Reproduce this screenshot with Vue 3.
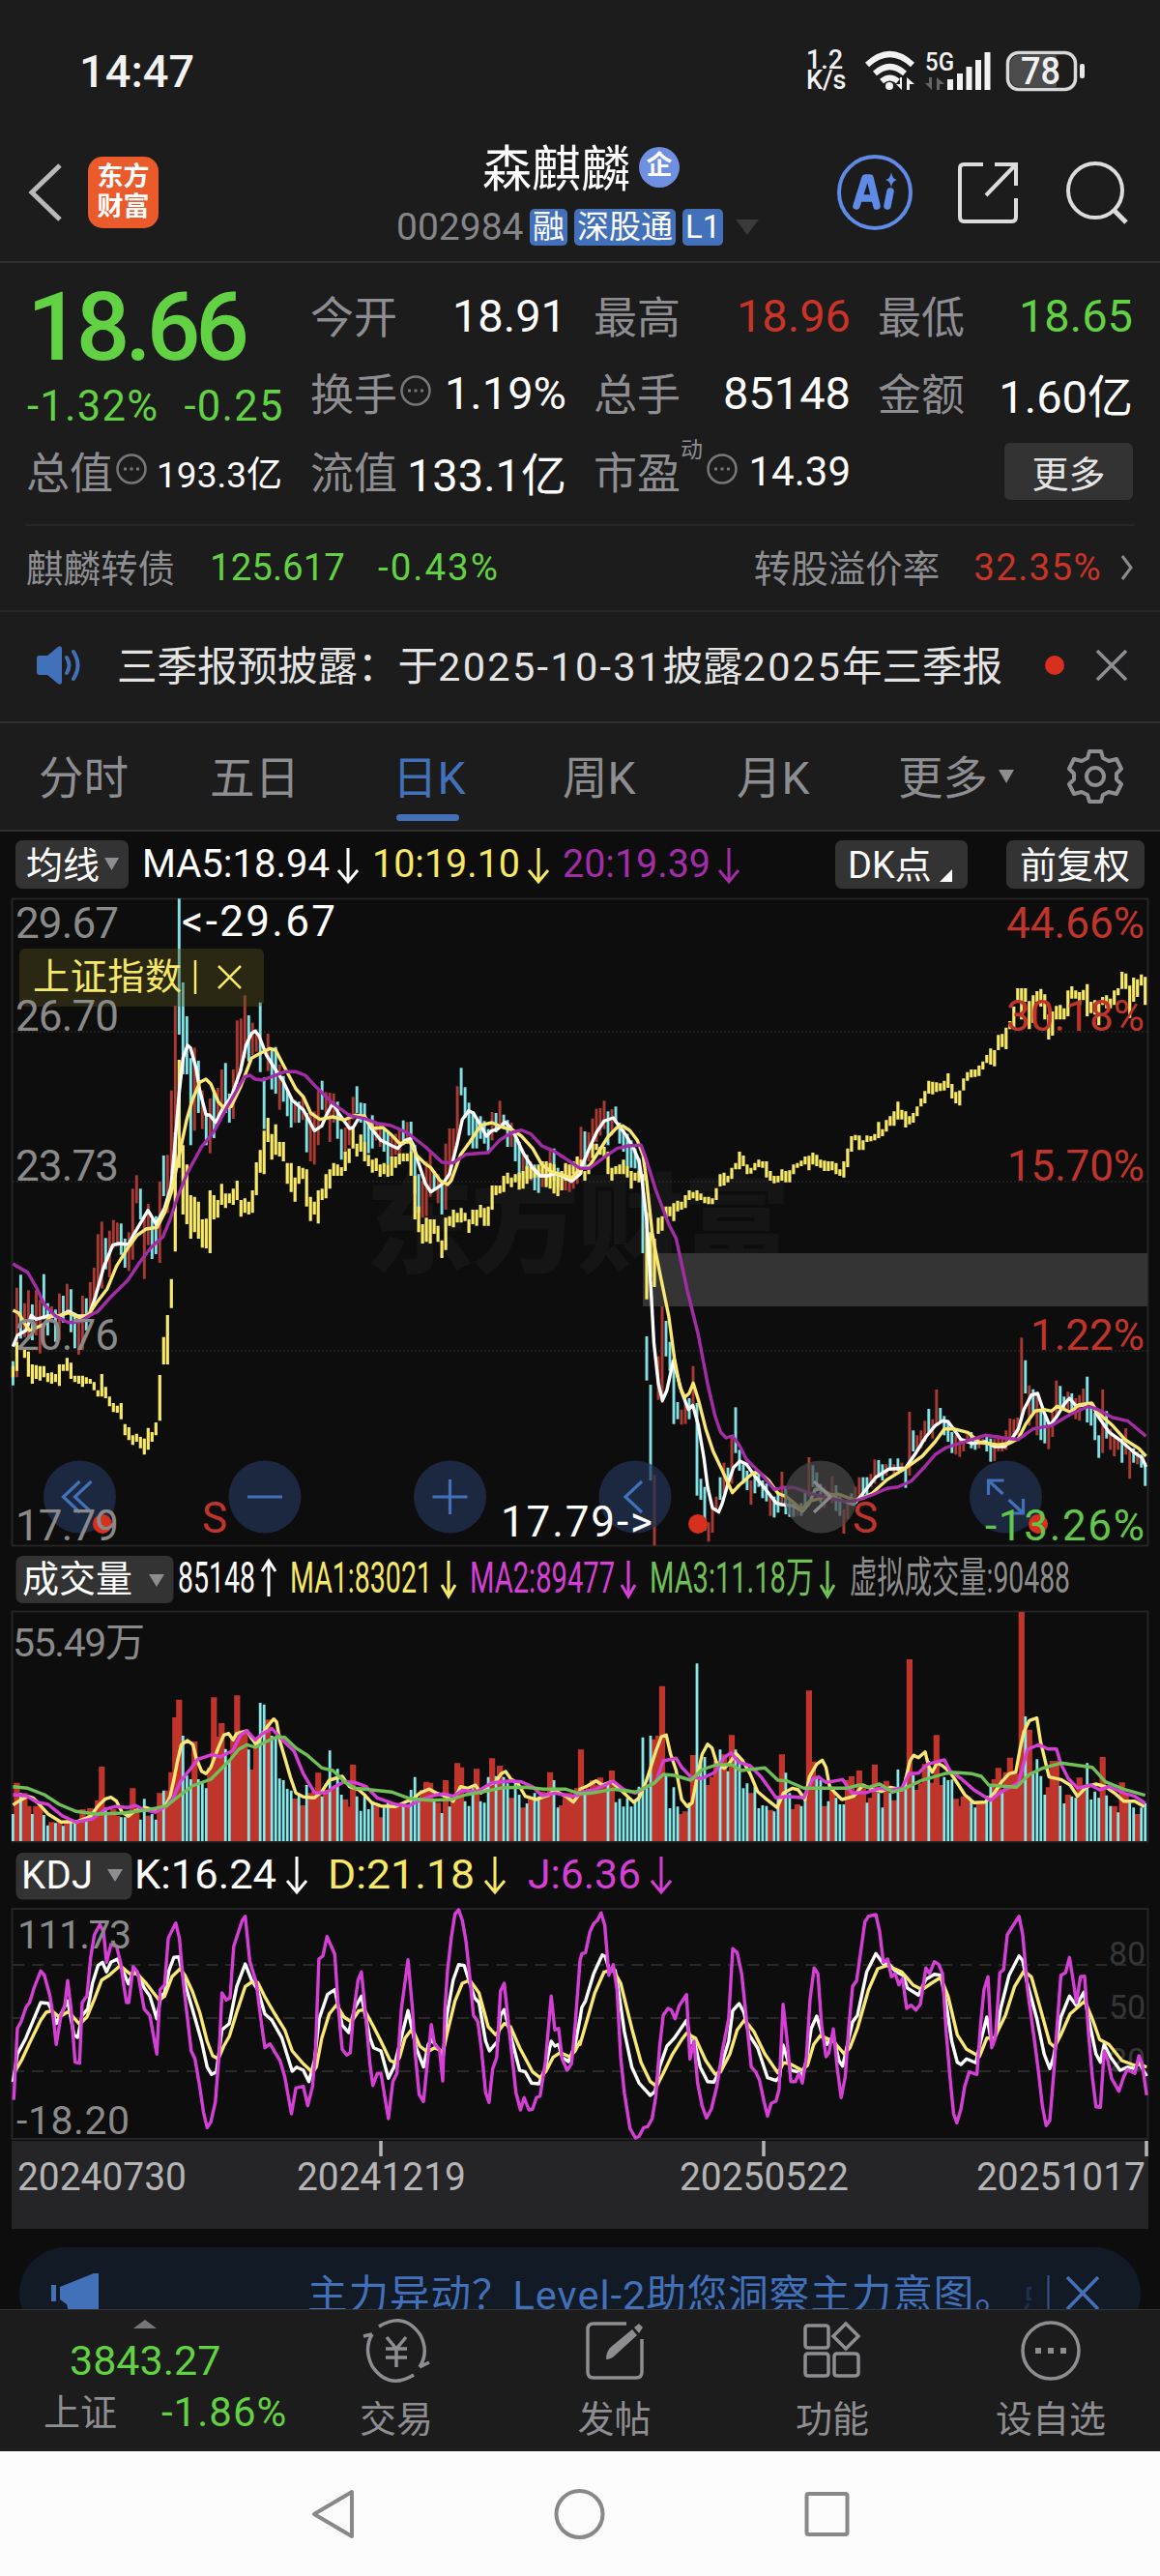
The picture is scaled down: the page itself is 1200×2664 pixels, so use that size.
<!--
  App.vue — 个股行情页（日K）
  从上到下：状态栏、标题栏、报价、公告、周期标签、三个图表、底部导航
-->

<template>
  <div class="page">
    <!-- 状态栏 -->
    <div class="status-bar">
      <span class="clock">14:47</span>
      <span class="speed">1.2<br>K/s</span>
      <svg class="status-icons" width="240" height="50" viewBox="890 48 240 50">
        <g fill="none" stroke="#f2f2f2" stroke-width="6">
          <path d="M897 67Q920.500 45 944 67" />
          <path d="M905 76Q920.500 62 936 76" />
          <path d="M912 84Q920.500 77 929 84" />
        </g>
        <circle cx="920" cy="89" r="4" fill="#f2f2f2" />
        <path d="M933 80v13l-6-6h4v-7zM938 93v-13l8 7h-5v6z" fill="#f2f2f2" />
        <text x="957" y="73" class="net" textLength="30" lengthAdjust="spacingAndGlyphs">5G</text>
        <path d="M964 80v13l-7-7h4v-6zM969 93v-13l8 7h-5v6z" fill="#666" />
        <path d="M983 93v-11M993 93v-17M1002.500 93v-24M1012 93v-31M1021.500 93v-39" stroke="#f2f2f2" stroke-width="6" />
        <rect x="1042.500" y="54.500" width="70" height="38" rx="11" fill="#1c1c1c" stroke="#d8d8d8" stroke-width="3.500" />
        <path d="M1055 57h38v33h-38q-10 0-10-10v-13q0-10 10-10z" fill="#4b4b4b" />
        <rect x="1117" y="66" width="5" height="15" rx="2" fill="#e8e8e8" />
        <text x="1056" y="87" class="battery" textLength="41" lengthAdjust="spacingAndGlyphs">78</text>
      </svg>
    </div>

    <!-- 标题栏 -->
    <header class="header">
      <svg class="back" width="40" height="64" viewBox="0 0 40 64"><path d="M35 4L6 32l29 28" /></svg>
      <div class="logo">东方<br>财富</div>
      <div class="title">
        <div class="name">森麒麟<i>企</i></div>
        <div class="code">
          <span>002984</span><b>融</b><b>深股通</b><b>L1</b>
          <svg width="24" height="16"><path d="M0 0h24L12 16z" fill="#3a3a3a" /></svg>
        </div>
      </div>
      <svg class="tools" width="320" height="90" viewBox="860 154 320 90">
        <circle cx="905" cy="199" r="37" fill="none" stroke="#5f8ae6" stroke-width="4" />
        <path d="M886 213l9-29h5l7 29M889 205h15M921 198l-3 15" fill="none" stroke="#5f8ae6" stroke-width="7.500" stroke-linecap="round" stroke-linejoin="round" />
        <path d="M922 178q1 7 6 8-5 1-6 8-1-7-6-8 5-1 6-8z" fill="#5f8ae6" />
        <g fill="none" stroke="#dcdcdc" stroke-width="4">
          <path d="M1017 170h-20q-4 0-4 4v50q0 5 4 5h50q4 0 4-5v-19M1029 170h22v22M1051 170l-31 32" />
          <circle cx="1133" cy="197" r="28" />
          <path d="M1152 217l13 13" stroke-width="5" />
        </g>
      </svg>
    </header>

    <!-- 报价 -->
    <section class="quote">
      <div class="price-col">
        <div class="price">18.66</div>
        <div class="change"><span>-1.32%</span><span>-0.25</span></div>
      </div>
      <div v-for="q in quotes" :key="q.label" class="cell" :class="q.size">
        <span class="label">{{ q.label }}<sup v-if="q.sup">{{ q.sup }}</sup></span>
        <svg v-if="q.info" class="info" width="32" height="32" viewBox="0 0 32 32">
          <circle cx="16" cy="16" r="14.500" fill="none" stroke="#77777b" stroke-width="2.500" />
          <path d="M8 16h3M14.500 16h3M21 16h3" stroke="#77777b" stroke-width="3" />
        </svg>
        <span class="value" :class="q.color">{{ q.value }}</span>
      </div>
      <button class="more">更多</button>
    </section>

    <div class="bond">
      <span class="cjk">麒麟转债</span>
      <span class="green b1">125.617</span>
      <span class="green b2">-0.43%</span>
      <span class="cjk premium">转股溢价率</span>
      <span class="red b3">32.35%</span>
      <svg width="14" height="28" viewBox="0 0 14 28"><path d="M2 2l9 12-9 12" fill="none" stroke="#8c8c90" stroke-width="3" /></svg>
    </div>

    <!-- 公告 -->
    <div class="notice">
      <svg width="50" height="42" viewBox="0 0 50 42">
        <path d="M3 11h9L23 2q4-2 4 2v34q0 4-4 2L12 31H4q-3 0-3-3V14q0-3 2-3z" fill="#4371b9" />
        <path d="M32 13q5 8 0 16M39 7q9 14 0 28" fill="none" stroke="#4371b9" stroke-width="4" stroke-linecap="round" />
      </svg>
      <p>三季报预披露：于<em>2025-10-31</em>披露<em>2025</em>年三季报</p>
      <i></i>
      <svg class="close" width="34" height="34" viewBox="0 0 34 34"><path d="M2 2l30 30M32 2L2 32" stroke="#8e8e92" stroke-width="3.500" /></svg>
    </div>

    <!-- 周期标签 -->
    <nav class="tabs">
      <span v-for="t in tabs" :key="t" :class="{ active: t === current }" @click="current = t">{{ t }}</span>
      <svg class="caret" width="16" height="14"><path d="M0 0h16L8 14z" fill="#8e8e92" /></svg>
      <svg class="gear" width="60" height="60" viewBox="-30 -30 60 60">
        <path d="M-6-26H6L8-19 14-16 22-18 27-8 22-3V3L27 8 22 18 14 16 8 19 6 26H-6L-8 19-14 16-22 18-27 8-22 3V-3L-27-8-22-18-14-16-8-19z" />
        <circle r="9" />
      </svg>
    </nav>

    <!-- 均线工具栏 -->
    <div class="ma-bar">
      <span class="btn drop">均线<svg width="15" height="13"><path d="M0 0h15L7.500 13z" fill="#8e8e92" /></svg></span>
      <svg width="640" height="50" viewBox="140 868 640 50">
        <g v-for="m in maLegend" :key="m.text" :style="{ color: m.color }" class="legend">
          <text :x="m.x" y="906" font-size="40" :textLength="m.w" lengthAdjust="spacingAndGlyphs">{{ m.text }}</text>
          <path :d="arrow(m.x + m.w + 19, 876, 911)" />
        </g>
      </svg>
      <span class="btn dk">DK点<svg width="13" height="13"><path d="M13 0v13H0z" fill="#fff" /></svg></span>
      <span class="btn fq">前复权</span>
    </div>

    <!-- K线主图 -->
    <svg class="panel" width="1200" height="674" viewBox="0 926 1200 674">
      <text class="watermark" x="378" y="1307" textLength="440">东方财富</text>
      <rect class="frame" x="12.500" y="928.500" width="1175" height="669" />
      <path class="grid" d="M13 1066H1187M13 1221H1187M13 1396H1187" />
      <rect x="665" y="1295" width="522" height="55" fill="#343434" />
      <path v-for="k in kBars" :key="k.d" :d="k.d" :stroke="k.color" stroke-width="2.900" />
      <path :d="indexBars" stroke="#f7e967" stroke-width="3.200" />
      <path :d="ma5" class="line" stroke="#fff" />
      <path :d="ma10" class="line" stroke="#fbe774" />
      <path :d="ma20" class="line" stroke="#a32da6" />

      <rect x="20" y="980" width="253" height="60" rx="6" fill="#57521b" fill-opacity=".4" />
      <text x="34" y="1022" font-size="38" fill="#f7e967" textLength="154">上证指数</text>
      <path d="M202 992v35M226 998l23 23M249 998l-23 23" stroke="#f7e967" stroke-width="2.500" />

      <g class="axis">
        <text v-for="a in priceAxis" :key="a.left" x="16" :y="a.y" textLength="107">{{ a.left }}</text>
      </g>
      <g v-for="b in roundButtons" :key="b.x">
        <circle :cx="b.x" cy="1547" r="37.500" :fill="b.gray ? '#474747' : '#223355'" fill-opacity=".72" />
        <path :d="b.icon" :transform="`translate(${b.x} 1547)`" fill="none" :stroke="b.gray ? '#8b8b8b' : '#4371b9'" stroke-width="3.200" />
      </g>
      <g class="sell">
        <text x="209" y="1584">S</text>
        <text x="882" y="1584">S</text>
      </g>
      <circle v-for="x in [106, 722, 1074]" :key="x" :cx="x" cy="1575" r="10" fill="#d8301f" />
      <text x="16" y="1592" class="over" textLength="107">17.79</text>
      <g class="axis-right">
        <text v-for="a in priceAxis" :key="a.right" x="1184" :y="a.y" :fill="a.fill" :textLength="a.w">{{ a.right }}</text>
        <text x="1184" y="1592" fill="#62c64a" textLength="165">-13.26%</text>
      </g>
      <g class="mark">
        <text x="188" y="967" textLength="159">&lt;-29.67</text>
        <text x="518" y="1588" textLength="157">17.79-&gt;</text>
      </g>
    </svg>

    <!-- 成交量 -->
    <svg class="panel" width="1200" height="306" viewBox="0 1600 1200 306">
      <rect x="16.500" y="1608" width="163" height="49" rx="7" fill="#333" />
      <text x="23" y="1645" font-size="38" fill="#fff" textLength="114">成交量</text>
      <path d="M154 1627h16l-8 13z" fill="#8e8e92" />
      <g v-for="m in volLegend" :key="m.text" :style="{ color: m.color }" class="legend">
        <text :x="m.x" y="1646" font-size="44" :textLength="m.w" lengthAdjust="spacingAndGlyphs">{{ m.text }}</text>
        <path v-if="m.ax" :d="m.up ? arrowUp(m.ax, 1613, 1650) : arrow(m.ax, 1613, 1650, 7)" />
      </g>
      <rect class="frame" x="12.500" y="1665.500" width="1175" height="238" />
      <text x="13" y="1712" class="vol-max" textLength="137">55.49万</text>
      <path :d="volRed" stroke="#c0352b" stroke-width="6.200" />
      <path :d="volCyan" stroke="#86e8e8" stroke-width="2.800" />
      <path :d="vma1" class="line" stroke="#fbe774" />
      <path :d="vma2" class="line" stroke="#d63fd6" />
      <path :d="vma3" class="line" stroke="#70bf57" />
    </svg>

    <!-- KDJ -->
    <svg class="panel" width="1200" height="307" viewBox="0 1906 1200 307">
      <rect x="16.500" y="1915" width="120" height="48.500" rx="7" fill="#333" />
      <text x="22" y="1952" font-size="40" fill="#fff" textLength="74">KDJ</text>
      <path d="M111 1932h16l-8 13z" fill="#8e8e92" />
      <g v-for="m in kdjLegend" :key="m.text" :style="{ color: m.color }" class="legend">
        <text :x="m.x" y="1952" font-size="43" :textLength="m.w" lengthAdjust="spacingAndGlyphs">{{ m.text }}</text>
        <path :d="arrow(m.ax, 1919, 1956)" />
      </g>
      <rect class="frame" x="12.500" y="1973" width="1175" height="238" />
      <path d="M13 2031H1187M13 2086H1187M13 2141H1187" stroke="#292929" stroke-width="2" stroke-dasharray="12 8" />
      <g class="kdj-axis">
        <text x="1147" y="2031">80</text>
        <text x="1147" y="2086">50</text>
        <text x="1147" y="2141">20</text>
      </g>
      <path :d="kLine" class="line" stroke="#fff" />
      <path :d="dLine" class="line" stroke="#fbe774" />
      <path :d="jLine" class="line" stroke="#d63fd6" />
      <g class="vol-max">
        <text x="18" y="2014" textLength="118">111.73</text>
        <text x="17" y="2206" textLength="117">-18.20</text>
      </g>
    </svg>

    <!-- 日期轴 -->
    <svg class="panel" width="1200" height="92" viewBox="0 2213 1200 92">
      <path d="M12 2213H1188V2304H12z" fill="#252527" />
      <path d="M394 2213v16M790 2213v16M1186 2213v16" stroke="#b5b5b5" stroke-width="3.500" />
      <text v-for="d in dates" :key="d.text" :x="d.x" y="2264" class="date" textLength="175" lengthAdjust="spacingAndGlyphs">{{ d.text }}</text>
    </svg>

    <!-- 推广条，下半部分被底部导航截断 -->
    <div class="promo-wrap">
      <div class="promo">
        <svg class="horn" width="50" height="44" viewBox="0 0 50 44">
          <path d="M0 13h5v17H0zM9 15L44 1h5v43H18q0-5-2-11l-7-5z" fill="#4371b9" />
        </svg>
        <p>主力异动？Level-2助您洞察主力意图。</p>
        <span class="next">点</span>
        <svg class="promo-x" width="60" height="44" viewBox="1080 2350 60 44">
          <path d="M1085.500 2353v41" stroke="#35568a" stroke-width="2" />
          <path d="M1105 2355l32 33M1137 2355l-32 33" stroke="#4371b9" stroke-width="3.500" />
        </svg>
      </div>
    </div>

    <!-- 底部导航 -->
    <footer class="bottom">
      <div class="index">
        <svg width="24" height="9"><path d="M0 9h24L12 0z" fill="#77777b" /></svg>
        <div class="point">3843.27</div>
        <div class="sub"><span>上证</span><b>-1.86%</b></div>
      </div>
      <div v-for="n in navs" :key="n.text" class="nav">
        <svg width="70" height="70" viewBox="-35 -35 70 70">
          <path :d="n.icon" />
          <path v-if="n.solid" :d="n.solid" class="solid" />
        </svg>
        <span>{{ n.text }}</span>
      </div>
    </footer>

    <!-- 系统导航键 -->
    <div class="system">
      <svg width="1200" height="130" viewBox="0 2534 1200 130">
        <g fill="none" stroke="#888" stroke-width="4" stroke-linejoin="round">
          <path d="M364 2576v46L325 2599z" />
          <circle cx="599.500" cy="2599" r="24" />
          <rect x="834.500" y="2578" width="42" height="42" rx="2" />
        </g>
      </svg>
    </div>
  </div>
</template>

<script setup>
import { ref } from 'vue'

const tabs = ['分时', '五日', '日K', '周K', '月K', '更多']
const current = ref('日K')

const quotes = [
  { label: '今开', value: '18.91' },
  { label: '最高', value: '18.96', color: 'red' },
  { label: '最低', value: '18.65', color: 'green' },
  { label: '换手', value: '1.19%', info: true },
  { label: '总手', value: '85148' },
  { label: '金额', value: '1.60亿' },
  { label: '总值', value: '193.3亿', info: true, size: 'small' },
  { label: '流值', value: '133.1亿' },
  { label: '市盈', value: '14.39', info: true, sup: '动', size: 'pe' }
]

const maLegend = [
  { text: 'MA5:18.94', x: 147, w: 194, color: '#fff' },
  { text: '10:19.10', x: 385, w: 153, color: '#f7e967' },
  { text: '20:19.39', x: 582, w: 153, color: '#a32da6' }
]
const volLegend = [
  { text: '85148', x: 184, w: 80, ax: 278, up: true, color: '#fff' },
  { text: 'MA1:83021', x: 300, w: 147, ax: 464, color: '#f7e967' },
  { text: 'MA2:89477', x: 486, w: 150, ax: 650, color: '#d63fd6' },
  { text: 'MA3:11.18万', x: 672, w: 170, ax: 856, color: '#70bf57' },
  { text: '虚拟成交量:90488', x: 879, w: 228, color: '#8c8c8c' }
]
const kdjLegend = [
  { text: 'K:16.24', x: 139, w: 147, ax: 307, color: '#fff' },
  { text: 'D:21.18', x: 339, w: 152, ax: 512, color: '#f7e967' },
  { text: 'J:6.36', x: 546, w: 117, ax: 684, color: '#d63fd6' }
]
const priceAxis = [
  { left: '29.67', right: '44.66%', y: 968.5, w: 143, fill: '#c0352b' },
  { left: '26.70', right: '30.18%', y: 1065, w: 143, fill: '#c0352b' },
  { left: '23.73', right: '15.70%', y: 1220, w: 142, fill: '#c0352b' },
  { left: '20.76', right: '1.22%', y: 1395, w: 118, fill: '#c0352b' }
]
const dates = [
  { text: '20240730', x: 18 },
  { text: '20241219', x: 307 },
  { text: '20250522', x: 703 },
  { text: '20251017', x: 1010 }
]
const roundButtons = [
  { x: 82.5, icon: 'M0-16L-17 0 0 16M12-16L-5 0 12 16' },
  { x: 274, icon: 'M-18 0H18' },
  { x: 465.5, icon: 'M-18 0H18M0-18V18' },
  { x: 657, icon: 'M7-16L-10 0 7 16' },
  { x: 849, icon: 'M-7-16L10 0-7 16', gray: true },
  { x: 1040.5, icon: 'M-18-2V-17H-2M-18-17L-3-3M18 2V17H2M18 17L3 3' }
]
const navs = [
  { text: '交易', icon: 'M-18-25Q8-41 25-16Q34 2 24 17M18 25Q-8 41-25 16Q-34-2-25-17M-25-17l-9 2M24 17l10-5M-10-14L0-2 10-14M0-2V17M-11-2H11M-11 7H11' },
  { text: '发帖', icon: 'M12-28H-22Q-28-28-28-22V22Q-28 28-22 28H22Q28 28 28 22V-12', solid: 'M-9 9Q-9 2-5-3L18-22 23-16 0 5Q-4 9-9 9zM20-24L25-28 29-24 25-18z' },
  { text: '功能', icon: 'M-25-26H-7Q-4-26-4-23V-6Q-4-3-7-3H-25Q-28-3-28-6V-23Q-28-26-25-26zM14-28L27-15 14-2 1-15zM-25 3H-7Q-4 3-4 6V23Q-4 26-7 26H-25Q-28 26-28 23V6Q-28 3-25 3zM5 3H23Q27 3 27 6V23Q27 26 23 26H5Q2 26 2 23V6Q2 3 5 3z' },
  { text: '设自选', icon: 'M-29 0A29 29 0 1 1 29 0A29 29 0 1 1-29 0z', solid: 'M-16-3h6v6h-6zM-3-3h6v6h-6zM10-3h6v6h-6z' }
]

function arrow(x, top, bottom, half = 10) {
  return `M${x} ${top}V${bottom}M${x - half} ${bottom - 12}L${x} ${bottom}L${x + half} ${bottom - 12}`
}
function arrowUp(x, top, bottom) {
  return `M${x} ${bottom}V${top}M${x - 7} ${top + 11}L${x} ${top}L${x + 7} ${top + 11}`
}

/* ---------- 图表数据：横轴单位 1/2.613 px，纵轴单位 1/3 px ---------- */
const SX = 1 / 2.6133
const HALF = 1568
const px = (x) => (x * SX).toFixed(1)
const py = (y, top) => (top + y / 3).toFixed(1)

// 左右两半分别记录，右半从 HALF 开始
function line(top, left, right) {
  const parse = (s, dx) => s.trim().split(/\s+/).map((p) => {
    const [x, y] = p.split(',').map(Number)
    return `${px(x + dx)} ${py(y, top)}`
  })
  return 'M' + [...parse(left, 0), ...parse(right, HALF)].join('L')
}

const candles = `
c1460-1535 r1232-1510 c1192-1390 r1280-1385 r1240-1390 c1284-1395 r1240-1380 r1270-1436 c1190-1330 c1280-1380
r1290-1340 c1300-1400 r1250-1395 c1257-1340 r1220-1310 c1237-1370 c1310-1420 r1330-1440 r1257-1425 c1265-1365
r1215-1320 r1170-1290 r1066-1240 r1027-1235 c1078-1175 r1055-1200 r1022-1110 r1030-1105 c1033-1130 c1080-1170
r1060-1180 r925-1145 r883-970 c925-1020 r1010-1205 r972-1100 c1020-1143 c1010-1128 r903-1155 c822-948
r820-1000 r620-880 r357-750 c25-447 c285-570 c390-570 c520-790 r487-745 c528-690 r620-740
c690-790 r645-815 c620-768 r612-720 r555-690 c535-690 c630-720 r555-708 r403-600 r397-560
r325-520 c387-530 r410-510 r430-500 c347-563 c580-740 r444-560 c490-617 c485-630 r540-680
c575-655 c620-700 c640-735 r650-720 c655-720 r632-712 c690-812 r690-840 r685-850 r622-790
c590-680 r625-690 r627-780 r630-720 c655-770 c740-835 r735-820 r690-790 r640-710 c607-690
c658-720 c660-780 c720-815 c697-800 r720-775 r725-795 c740-810 c750-850 r765-830 r755-820
r740-815 c713-790 r718-770 c717-810 c790-940 c880-1000 r900-1015 r840-1010 r812-950 c870-930
r880-970 c900-1005 r785-990 r738-900 r738-840 r607-790 c550-635 c610-705 c658-760 c690-800
c710-800 c700-770 c715-785 c740-810 r687-775 c690-750 r652-740 c695-735 c712-795 r720-795
c750-840 c780-900 r810-890 c820-895 r840-900 c850-930 c865-938 r860-920 r850-910 r797-890
c800-900 c860-920 r870-930 r850-930 r860-935 r870-925 r830-910 r733-880 c747-860 r750-840
r707-800 r677-780 r675-760 r652-740 c685-790 r678-760 c670-720 c720-785 c740-810 c755-855
c775-860 c800-862 c830-890 c880-1125 c1383-1520 c1533-1830 r1813-2032 r1445-1580 r1290-1590 c1335-1445
c1400-1490 c1450-1655 c1587-1640 r1610-1657 r1590-1655 c1575-1640 r1475-1600 c1590-1877 c1825-1890 c1850-1985
r1960-2020 r1915-1992 r1880-1925 c1820-1890 r1775-1870 c1790-1840 r1690-1840 c1603-1745 c1735-1800 c1780-1840
c1800-1860 r1830-1905 c1800-1870 c1800-1850 c1830-1885 c1840-1895 r1870-1940 c1880-1945 c1870-1930 r1803-1905
c1850-1935 c1890-1943 c1900-1943 r1910-1940 c1900-1940 c1860-1920 r1758-1880 c1783-1850 c1805-1860 c1840-1900
r1850-1915 c1865-1890 r1817-1900 c1845-1925 c1880-1940 r1920-1995 r1895-1950 c1870-1905 r1850-1900 r1820-1890
c1820-1880 c1820-1880 r1810-1850 r1765-1840 c1767-1820 c1780-1830 r1780-1815 c1762-1800 r1780-1810 c1762-1800
r1775-1800 c1790-1853 r1617-1815 c1675-1740 r1690-1740 r1675-1730 r1645-1710 c1608-1680 r1640-1700 r1548-1660
c1605-1650 c1630-1690 c1645-1710 c1680-1745 r1690-1750 r1705-1757 r1700-1740 r1680-1715 c1680-1730 c1695-1735
r1695-1730 r1700-1720 c1690-1740 c1700-1772 r1700-1770 r1690-1740 r1700-1740 r1675-1735 r1638-1710 r1640-1700
r1635-1690 r1387-1640 c1457-1560 r1535-1660 c1547-1620 r1560-1690 c1610-1705 c1630-1715 r1650-1733 r1620-1695
r1520-1640 c1537-1600 c1570-1610 r1555-1610 c1560-1620 r1575-1640 r1565-1645 r1545-1600 c1508-1650 c1590-1660
c1620-1705 c1690-1760 r1548-1745 c1615-1700 r1670-1735 r1690-1755 r1700-1735 c1700-1775 r1668-1750 r1740-1825
c1730-1775 r1740-1780 c1750-1790 c1775-1847`.trim().split(/\s+/)

const indexRange = `
1475-1510 1400-1490 1410-1420 1420-1450 1430-1508 1470-1530 1472-1515 1475-1520 1475-1510 1497-1525
1495-1530 1500-1525 1470-1537 1470-1490 1450-1490 1465-1515 1505-1525 1505-1530 1505-1540 1510-1530
1515-1530 1525-1550 1550-1570 1500-1570 1540-1575 1570-1600 1590-1618 1598-1620 1590-1640 1655-1690
1665-1705 1690-1720 1685-1710 1695-1730 1700-1750 1667-1735 1680-1710 1650-1690 1503-1645 1385-1470
1317-1470 1205-1295 750-1120 525-860 790-1005 850-1035 945-1080 950-1060 965-1080 1020-1108
1018-1110 930-1125 945-1020 960-1015 910-975 940-985 940-970 925-975 900-960 960-1012
955-1000 965-1005 930-1000 843-945 805-875 745-880 705-780 755-835 725-820 780-825
780-840 845-910 845-935 890-965 855-910 860-895 865-980 950-1025 965-1005 930-1033
925-960 880-955 865-925 845-885 850-885 858-885 810-870 800-845 735-800 785-825
757-810 780-840 820-855 835-875 830-870 850-888 845-880 850-888 825-885 825-860
815-850 815-840 815-840 810-885 885-1020 980-1060 1035-1095 1015-1090 1020-1095 1020-1065
1040-1090 1085-1140 1015-1115 1010-1040 990-1045 1000-1030 985-1030 1000-1025 1020-1062 990-1035
990-1040 975-1015 985-1040 980-1040 915-990 915-945 915-940 885-935 875-910 890-920
880-905 875-928 870-925 855-910 850-895 860-890 850-890 840-890 840-920 845-925
850-940 880-948 870-930 845-900 850-885 840-880 825-880 835-880 870-900 850-880
785-830 785-805 795-820 795-825 810-880 860-900 855-880 850-880 835-880 855-890
870-925 875-900 870-905 880-900 1000-1268 1060-1200 1080-1230 1015-1065 1010-1055 980-1015
980-1010 970-1025 962-995 965-990 945-985 930-960 935-955 930-962 940-960 950-970
950-973 955-973 923-960 880-918 875-915 885-905 860-895 845-865 810-865 822-855
850-880 860-878 845-868 835-858 840-860 840-890 870-900 885-908 885-905 865-900
870-905 868-905 850-880 845-860 838-855 825-850 823-868 813-850 820-855 835-860
838-870 840-870 840-868 845-880 865-885 840-890 800-858 762-810 758-775 760-805
775-805 760-780 762-778 755-775 718-768 740-762 712-748 700-730 685-730 655-710
680-710 685-735 700-725 690-720 670-700 645-670 622-660 590-630 593-632 595-625
598-622 590-620 567-612 600-645 625-660 620-667 583-620 563-590 555-580 555-578
543-575 530-555 510-535 490-540 495-545 448-495 445-485 425-492 405-430 360-425
303-345 303-400 303-345 343-430 325-410 312-345 305-360 322-400 385-462 375-450
358-400 355-400 365-400 310-390 297-335 310-335 315-355 308-340 290-390 345-380
340-385 350-418 330-355 325-365 335-365 310-355 303-325 252-305 257-305 295-395
270-345 275-330 260-295 268-355`.trim().split(/\s+/)

// 成交量柱顶，带 r/c 后缀的颜色与K线不同
const volumes = `
705 608 640 640 680 705 680 680 708 740 730 733 730 742 730 733 733 730 690 715
687 690 662 558 685 705 690 710 715 715 700 625 700 722 658c 710 705 722 640 632
632 575 405 350r 462 585 597 480 597 605c 625 560 343r 465 423 503 540 470 337 460
450 505 567 470 360 365 412 462 465 595c 600 627 632 657 648 678 615 640 635 577
650 630 508c 620 565 645 660 682 552 650 695 650 690 665 680 715 685 670 685 685
675 680c 675 630 590 660 630 605 608 660 670 702 600 682c 650 547 560r 665 680 625
565r 665 670 590 532 587 555 590 610 655 600 645 685 672 655 640 650 635 640 575
600 685 678 640 640 650 625 505 645 625 600 615 592 610 610 570 668 658 682 655
682 665 620 467 615 462 473 462 308 580 687 622 682 705 697 670 522 238 540 528
615 590 540 505 520 572 460 505 545 625 610 640 620 687 678 680 692 697 650 520
577 640 690r 675 680 640 322 542r 590 600 680 665 620 655 675 675c 600 588r 650 570
620r 670 655 552 640 685 602 640 662 567 625 590 225 585 630 610 550 540 608 460
615r 590 600 598 658 680 650 650 660 685 670 670 648 620 597 562 640c 575 530 570
580 78 402 443 580 535c 587 645 622 540 540 617 672 645 650 655c 592 625 547 660
635 655 528 647 680c 680 700c 607r 640 670c 685 705 685 672`.trim().split(/\s+/)

const STEP = 3061 / (candles.length - 1)
const barX = (i) => px(35 + i * STEP)
function stick(i, range, top) {
  const [hi, lo] = range.split('-').map(Number)
  return `M${barX(i)} ${py(hi, top)}V${py(lo, top)}`
}

const kBars = candles.map((c, i) => ({
  d: stick(i, c.slice(1), 920),
  color: c[0] === 'r' ? '#a83a31' : '#7fe3e6'
}))
const indexBars = indexRange.map((r, i) => stick(i, r, 920)).join('')

const volColor = (v, i) => (/[rc]$/.test(v) ? v.slice(-1) : candles[Math.min(i, candles.length - 1)][0])
const volPath = (color) => volumes
  .map((v, i) => (volColor(v, i) === color ? `M${barX(i)} 1903V${py(parseInt(v), 1640)}` : ''))
  .join('')
const volRed = volPath('r')
const volCyan = volPath('c')

const ma5 = line(920,
  '35,1415 47,1380 70,1365 85,1318 97,1330 130,1320 160,1320 185,1305 210,1320 240,1320 258,1260 280,1170 305,1100 320,1095 347,1098 360,1070 400,992 422,1035 445,985 462,920 472,800 485,620 495,520 507,480 515,488 530,550 540,620 557,695 567,697 583,720 600,680 625,640 650,560 665,480 680,443 690,436 700,450 720,510 750,565 765,590 790,650 805,665 820,680 850,745 870,730 885,690 900,660 915,690 945,738 955,735 970,705 985,700 1005,740 1030,775 1075,800 1095,775 1108,770 1118,790 1130,840 1150,910 1165,935 1185,920 1200,905 1215,880 1235,790 1250,710 1267,683 1280,690 1295,720 1315,762 1330,745 1345,740 1365,718 1380,735 1395,765 1415,815 1440,860 1460,885 1480,885 1500,878 1520,885 1545,902 1568,880',
  '5,855 25,800 45,750 65,715 90,705 105,730 125,760 145,800 160,840 168,900 180,1020 190,1200 200,1405 212,1530 223,1582 235,1550 252,1460 262,1500 275,1555 293,1610 305,1597 320,1660 335,1760 345,1850 358,1915 375,1928 385,1900 400,1840 415,1790 432,1770 450,1780 475,1820 500,1855 530,1900 545,1905 575,1908 602,1925 620,1900 635,1860 650,1855 670,1870 700,1890 740,1905 765,1870 800,1820 835,1795 880,1792 905,1750 935,1695 960,1660 980,1645 995,1648 1010,1670 1030,1703 1060,1715 1095,1710 1120,1725 1148,1725 1165,1705 1185,1670 1200,1610 1220,1565 1237,1560 1255,1620 1270,1660 1290,1630 1308,1595 1323,1575 1340,1598 1385,1593 1400,1630 1430,1680 1460,1705 1500,1745 1520,1760 1530,1788')
const ma10 = line(920,
  '35,1302 50,1310 65,1340 80,1365 100,1355 120,1345 140,1315 160,1320 185,1310 215,1325 240,1315 260,1280 290,1235 315,1165 345,1110 370,1070 395,1050 425,1045 445,1000 465,930 490,790 505,710 520,650 540,595 557,585 570,600 590,655 605,675 625,670 650,610 680,520 700,507 730,490 745,495 770,550 800,615 820,640 840,690 865,710 900,702 930,712 960,697 985,700 1010,738 1035,735 1060,760 1080,785 1108,778 1125,820 1150,848 1165,860 1190,900 1210,912 1220,900 1245,820 1270,780 1300,728 1330,720 1360,735 1385,742 1410,762 1440,800 1465,850 1490,872 1520,882 1545,892 1568,865',
  '25,855 45,820 75,765 100,735 115,730 135,745 155,775 170,820 180,900 195,1060 205,1125 220,1210 240,1320 255,1450 270,1540 283,1572 295,1560 306,1528 320,1580 340,1670 360,1740 385,1800 412,1868 430,1845 465,1810 485,1805 510,1830 535,1870 560,1882 600,1920 620,1895 650,1885 675,1875 700,1873 740,1890 765,1885 790,1870 830,1828 880,1792 925,1755 960,1710 985,1670 1010,1670 1050,1682 1080,1712 1130,1720 1160,1715 1185,1700 1205,1655 1230,1615 1255,1610 1275,1615 1290,1600 1325,1618 1350,1595 1383,1590 1400,1620 1440,1660 1475,1705 1510,1730 1530,1755')
const ma20 = line(920,
  '35,1158 75,1185 100,1235 120,1285 150,1320 185,1340 215,1338 240,1320 265,1305 300,1260 345,1210 380,1150 410,1105 440,1075 460,1020 480,950 505,880 545,795 580,745 610,680 640,620 660,578 675,573 690,585 710,588 740,575 770,562 800,562 825,573 855,610 900,660 945,698 985,707 1020,722 1055,728 1100,750 1150,795 1195,843 1225,845 1260,818 1320,813 1350,775 1385,750 1410,743 1435,755 1465,792 1500,810 1540,840 1568,862',
  '25,862 60,832 100,800 130,792 165,790 178,830 205,930 240,1035 260,1080 290,1240 320,1380 345,1530 365,1630 380,1680 395,1698 412,1692 430,1720 450,1765 490,1810 525,1858 550,1852 580,1852 620,1870 665,1882 715,1895 745,1893 790,1875 830,1855 860,1850 895,1832 930,1790 960,1750 990,1728 1040,1710 1095,1690 1145,1698 1185,1703 1225,1670 1275,1660 1325,1625 1375,1600 1400,1610 1440,1635 1480,1645 1530,1693')

const vma1 = line(1640,
  '35,677 55,662 75,650 90,655 110,680 130,705 165,730 210,728 245,712 265,680 285,658 300,653 315,665 330,700 347,712 365,695 395,685 420,695 445,685 460,650 470,600 480,540 490,490 507,477 522,490 530,530 545,572 557,580 570,560 590,500 605,460 618,455 630,475 640,455 668,447 680,470 693,490 705,465 725,430 740,410 748,420 757,480 770,530 785,590 800,640 820,652 850,655 870,635 890,600 925,588 945,620 970,630 985,645 1005,670 1030,680 1070,682 1095,668 1115,660 1135,640 1160,628 1180,640 1205,650 1225,665 1245,620 1265,625 1285,615 1300,640 1320,615 1340,605 1355,580 1367,573 1380,595 1400,610 1420,650 1450,660 1480,648 1500,632 1530,650 1550,668 1568,640',
  '0,628 20,618 43,602 60,615 85,605 110,630 145,668 160,655 180,600 205,510 220,465 233,460 245,520 260,570 275,660 290,682 303,670 315,600 330,520 345,488 357,500 370,550 390,563 405,545 422,517 440,540 460,580 480,635 500,655 533,685 550,640 575,625 590,630 608,660 620,590 640,550 655,538 665,560 675,620 690,640 708,660 740,650 765,615 790,628 815,635 840,622 870,630 880,600 892,540 902,523 915,530 933,512 942,555 952,575 965,547 980,555 1000,575 1015,600 1040,645 1065,670 1095,668 1120,640 1140,605 1160,580 1178,575 1190,500 1200,450 1215,415 1235,407 1245,480 1268,590 1300,598 1325,615 1345,650 1370,620 1395,612 1420,620 1445,640 1470,665 1500,665 1525,682')
const vma2 = line(1640,
  '35,645 70,648 100,668 130,675 170,712 205,730 250,720 285,690 310,682 345,685 365,678 390,692 420,700 450,680 470,650 490,600 515,565 535,535 575,520 595,528 630,508 650,460 668,447 690,475 710,455 735,440 755,465 795,510 820,580 850,638 880,640 905,620 930,605 960,607 990,620 1020,655 1070,675 1105,680 1140,660 1170,648 1200,642 1225,650 1250,632 1290,635 1330,608 1380,602 1410,605 1440,620 1465,648 1500,640 1545,650 1568,645',
  '0,638 40,630 90,603 120,630 150,640 180,620 205,605 225,540 260,532 275,560 300,590 330,595 365,575 390,530 408,515 430,545 460,555 490,590 530,655 560,650 605,655 630,595 645,590 665,607 710,598 735,640 775,638 810,625 840,630 870,625 890,580 915,578 940,550 985,537 1000,570 1030,595 1065,630 1110,662 1140,635 1185,608 1210,505 1240,490 1265,503 1288,503 1300,550 1320,595 1345,625 1380,615 1405,630 1430,620 1470,640 1500,650 1528,672')
const vma3 = line(1640,
  '35,620 75,625 120,645 160,675 205,697 260,705 330,702 400,692 450,680 485,648 520,618 570,597 620,540 645,505 668,490 690,498 720,480 750,465 770,467 800,500 830,522 870,562 900,570 935,608 960,625 1060,637 1110,658 1165,662 1220,660 1260,645 1310,635 1360,623 1420,622 1470,628 1530,628 1568,642',
  '0,642 30,640 90,628 150,637 200,610 225,582 255,585 300,600 330,567 370,552 410,552 435,570 500,562 535,600 560,602 605,625 720,625 755,615 780,622 810,612 845,637 880,625 920,602 985,580 1010,576 1060,580 1085,588 1105,615 1180,622 1215,582 1250,563 1300,547 1385,560 1420,605 1470,628 1528,647')

const jLine = line(1960,
  '37,632 47,410 57,390 70,345 80,330 92,285 110,232 120,245 135,310 143,365 152,460 165,370 175,340 183,262 192,350 203,515 215,518 222,330 235,310 245,190 255,120 270,88 280,110 288,205 300,150 315,155 327,210 335,280 342,330 348,330 360,218 372,235 390,350 405,370 424,490 433,290 445,275 455,130 475,83 485,130 495,260 517,480 527,505 540,590 550,670 560,718 570,700 582,640 592,500 600,300 612,322 622,315 632,155 655,75 663,62 675,200 693,270 705,380 716,470 730,458 757,510 770,560 788,675 800,595 820,590 832,650 845,590 853,480 862,195 873,185 884,125 905,180 915,350 925,475 937,493 947,485 955,370 968,260 977,235 987,350 1000,520 1008,587 1020,550 1030,550 1050,690 1062,575 1073,550 1085,350 1103,197 1115,350 1122,480 1133,615 1145,637 1155,520 1166,398 1175,460 1188,475 1197,573 1203,350 1210,230 1220,130 1230,55 1240,42 1250,75 1260,140 1270,250 1280,370 1292,390 1302,480 1313,610 1322,640 1332,535 1343,500 1353,295 1363,270 1375,400 1395,610 1407,663 1417,625 1430,663 1440,660 1450,625 1460,620 1475,510 1490,310 1500,415 1510,410 1520,505 1533,540 1545,520 1555,400 1568,200',
  '5,178 15,175 27,110 37,85 47,75 57,52 67,90 78,245 90,212 100,290 110,500 120,610 135,720 150,750 160,745 172,718 183,715 195,690 205,620 215,470 225,370 238,348 247,353 257,380 268,340 288,305 297,505 308,450 318,580 330,650 342,688 355,660 370,590 385,480 402,380 413,163 425,175 437,240 447,350 463,530 475,545 485,570 498,640 507,682 517,643 530,635 538,600 549,335 560,450 570,575 582,575 592,550 601,580 612,500 622,320 633,223 643,240 653,400 665,498 673,485 685,412 695,530 706,625 717,560 727,400 737,280 748,262 770,80 780,62 800,57 810,110 820,205 832,195 842,250 852,240 862,275 872,255 883,348 895,338 908,353 920,335 935,223 945,240 958,203 970,212 980,240 990,420 1000,560 1010,675 1019,703 1030,660 1040,590 1052,545 1073,553 1083,400 1092,290 1103,250 1113,470 1123,440 1135,238 1145,228 1155,120 1187,62 1197,120 1210,290 1230,460 1240,550 1250,650 1260,712 1270,695 1280,560 1290,400 1300,245 1313,237 1323,190 1333,260 1342,330 1353,250 1364,248 1375,430 1385,560 1395,653 1407,655 1417,480 1427,510 1437,565 1457,605 1470,560 1480,538 1500,550 1511,495 1520,520 1532,617')
const kLine = line(1960,
  '35,577 47,490 70,440 90,385 110,330 130,332 143,360 152,395 165,365 183,325 200,430 210,438 222,370 237,350 250,270 265,215 277,205 288,235 300,205 317,195 330,225 347,272 360,235 372,240 390,285 405,310 424,380 435,310 445,300 457,230 470,190 483,188 500,270 525,370 545,450 560,530 572,553 585,545 600,415 620,395 640,280 663,210 680,260 697,290 716,365 735,385 762,440 790,543 802,530 820,540 835,575 850,510 863,380 885,305 905,290 925,400 943,423 958,350 977,310 1000,440 1010,470 1030,480 1050,565 1065,530 1080,460 1103,355 1125,470 1145,530 1158,460 1166,445 1190,480 1197,510 1208,370 1225,260 1240,212 1255,215 1270,270 1283,315 1295,330 1313,450 1323,480 1345,450 1353,370 1363,352 1380,430 1405,540 1420,545 1437,580 1457,582 1475,530 1490,450 1500,465 1510,460 1520,500 1537,513 1555,460 1568,380',
  '5,345 15,325 37,240 60,182 68,187 80,230 95,230 105,300 120,420 140,530 160,580 190,618 203,605 215,530 235,465 255,440 288,385 300,455 308,445 325,530 345,575 362,577 378,540 402,450 413,355 430,333 443,360 457,430 480,470 507,563 530,572 540,560 549,462 570,540 590,545 601,555 612,510 625,410 640,372 655,430 667,460 685,435 700,510 710,527 725,450 737,390 750,370 775,235 800,178 820,210 835,210 855,235 873,245 885,285 915,307 935,258 958,242 975,245 988,320 1005,450 1020,515 1030,522 1045,505 1070,517 1083,450 1100,375 1113,455 1125,430 1137,350 1160,245 1187,185 1197,200 1207,260 1235,380 1255,490 1270,535 1280,500 1300,375 1323,310 1342,340 1362,298 1375,380 1395,490 1407,515 1417,460 1435,500 1460,540 1480,530 1500,535 1511,515 1532,558')
const dLine = line(1960,
  '40,545 60,505 80,455 110,385 125,360 140,355 160,375 185,358 215,397 235,375 255,320 275,260 295,245 325,215 350,240 370,240 395,270 430,322 445,310 465,250 487,225 500,245 520,295 540,360 560,450 575,495 590,505 605,465 620,435 640,360 663,280 680,267 697,268 715,310 740,360 770,415 790,480 820,520 845,547 855,530 870,440 890,365 910,337 930,375 950,390 970,355 985,352 1010,405 1030,450 1055,510 1070,517 1080,500 1095,440 1110,417 1120,425 1135,465 1155,483 1175,470 1198,482 1210,420 1230,325 1250,270 1270,260 1295,300 1320,405 1340,430 1363,395 1380,405 1405,470 1440,545 1460,563 1475,545 1495,500 1515,485 1540,498 1555,480 1568,450',
  '0,460 20,380 40,300 65,235 90,228 110,270 140,410 165,515 190,575 207,590 225,550 250,490 275,445 288,425 312,440 340,510 365,552 380,545 405,490 425,415 445,383 470,420 500,490 535,548 550,517 565,518 600,540 615,525 632,460 650,432 685,450 715,490 730,470 750,410 780,290 805,225 830,215 870,235 900,275 925,290 950,270 975,252 995,310 1020,430 1045,475 1080,497 1100,440 1120,440 1150,370 1175,280 1200,232 1220,250 1245,350 1270,455 1283,468 1300,430 1325,365 1365,325 1385,380 1405,445 1430,460 1465,510 1500,525 1511,520 1532,530')
</script>

<style>
body {
  margin: 0;
  background: #0d0d0d;
}
</style>

<style scoped>
.page {
  width: 1200px;
  height: 2664px;
  overflow: hidden;
  background: #0d0d0d;
  color: #8e8e92;
  font-family: Roboto, "Noto Sans CJK SC", sans-serif;
  white-space: nowrap;
}
svg {
  display: block;
  flex: none;
}
.green { color: #62d143; }
.red { color: #c83427; }

/* ---------- 状态栏 ---------- */
.status-bar {
  display: flex;
  height: 142px;
  background: #1c1c1c;
  color: #f2f2f2;
}
.clock {
  width: 752px;
  padding: 46px 0 0 82px;
  font-size: 47px;
  font-weight: 500;
  line-height: 56px;
}
.speed {
  width: 56px;
  padding-top: 52px;
  font-size: 27px;
  font-weight: 500;
  line-height: 21px;
  text-align: left;
}
.status-icons { margin-top: 48px; }
.net {
  font-size: 26px;
  font-weight: 500;
  fill: #f2f2f2;
}
.battery {
  font-size: 38px;
  font-weight: 500;
  fill: #f2f2f2;
}

/* ---------- 标题栏 ---------- */
.header {
  display: flex;
  box-sizing: border-box;
  height: 130px;
  border-bottom: 2px solid #303030;
  background: #1c1c1c;
}
.back {
  margin: 25px 0 0 27px;
  fill: none;
  stroke: #b9b9b9;
  stroke-width: 5;
}
.logo {
  box-sizing: border-box;
  width: 73px;
  height: 74px;
  margin: 20px 0 0 24px;
  padding-top: 6px;
  border-radius: 15px;
  background: #ea5a2b;
  color: #fff;
  font-size: 27px;
  font-weight: 700;
  line-height: 31px;
  text-align: center;
}
.title {
  width: 442px;
  margin-left: 217px;
}
.title .name {
  display: flex;
  align-items: center;
  height: 58px;
  padding-left: 118px;
  color: #fff;
  font-size: 51px;
}
.name i {
  width: 42px;
  height: 42px;
  margin: 4px 0 0 9px;
  border-radius: 50%;
  background: #6f8fe0;
  font-size: 27px;
  font-style: normal;
  font-weight: 700;
  line-height: 39px;
  text-align: center;
}
.code {
  display: flex;
  align-items: center;
  height: 70px;
  padding-left: 29px;
  font-size: 39px;
}
.code span {
  width: 138px;
  color: #85858a;
}
.code b {
  margin-right: 7px;
  padding: 0 3px;
  border-radius: 5px;
  background: #4371b9;
  color: #fff;
  font-size: 33px;
  font-weight: 400;
  line-height: 38px;
}
.code svg { margin-left: 6px; }
.tools { margin: 12px 0 0 37px; }

/* ---------- 报价 ---------- */
.quote {
  position: relative;
  display: grid;
  grid-template-columns: 265px 266px 264px;
  grid-template-rows: 80px 81px 81px;
  column-gap: 28px;
  box-sizing: border-box;
  height: 270px;
  padding: 14px 0 0 321px;
  background: #1c1c1c;
  font-size: 45px;
}
.price-col {
  position: absolute;
  left: 28px;
  top: 0;
  color: #62d143;
}
.price {
  margin-top: 17px;
  font-size: 98px;
  font-weight: 500;
  line-height: 100px;
  letter-spacing: -5px;
}
.change {
  display: flex;
  gap: 26px;
  margin-top: 6px;
  font-size: 43.500px;
  line-height: 52px;
  letter-spacing: 1.300px;
}
.cell {
  display: flex;
  align-items: center;
}
.cell .value {
  margin-left: auto;
  color: #fff;
  font-size: 47px;
}
.cell .value.red { color: #c83427; }
.cell .value.green { color: #62d143; }
.cell .label {
  position: relative;
  margin-top: -2px;
}
.cell sup {
  position: absolute;
  top: -8px;
  left: 90px;
  font-size: 23px;
}
.info { margin: 0 0 6px 3px; }
.cell.small {
  grid-row: 3;
  grid-column: 1;
  width: 265px;
  margin-left: -294px;
}
.cell.small .value { font-size: 37px; }
.quote .cell:nth-child(9) {
  grid-row: 3;
  grid-column: 1;
}
.cell.pe {
  grid-row: 3;
  grid-column: 2;
}
.cell.pe .info { margin-left: 27px; }
.cell.pe .value { font-size: 42px; }
.more {
  grid-row: 3;
  grid-column: 3;
  align-self: center;
  justify-self: end;
  width: 133px;
  height: 59px;
  padding: 0;
  border: 0;
  border-radius: 6px;
  background: #333;
  color: #e4e4e4;
  font: 38px/53px "Noto Sans CJK SC", sans-serif;
}

.bond {
  display: flex;
  align-items: center;
  box-sizing: border-box;
  height: 91px;
  margin: 0;
  padding: 0 27px;
  border-bottom: 2px solid #282828;
  background: linear-gradient(#272727, #272727) 27px 0 / 1146px 2px no-repeat #1c1c1c;
  font-size: 38.500px;
}
.bond .cjk { margin-top: -4px; }
.bond .b1 { margin-left: 36px; }
.bond .b2 {
  margin-left: 34px;
  letter-spacing: 2px;
}
.bond .premium { margin-left: auto; }
.bond .b3 {
  margin: 0 19px 0 35px;
  letter-spacing: 1.300px;
}

/* ---------- 公告 ---------- */
.notice {
  display: flex;
  align-items: center;
  box-sizing: border-box;
  height: 115px;
  padding: 0 33px 3px 37px;
  border-bottom: 2px solid #303030;
  background: #1c1c1c;
}
.notice p {
  width: 920px;
  margin: -5px 0 0 34px;
  color: #e4e4e4;
  font-size: 41.500px;
}
.notice em {
  font-style: normal;
  letter-spacing: 2.300px;
}
.notice i {
  width: 20px;
  height: 20px;
  margin-left: 40px;
  border-radius: 50%;
  background: #d8301f;
}
.notice .close { margin-left: auto; }

/* ---------- 周期标签 ---------- */
.tabs {
  display: flex;
  align-items: center;
  box-sizing: border-box;
  height: 112px;
  padding-left: 40px;
  border-bottom: 2px solid #303030;
  background: #1c1c1c;
  font-size: 46.500px;
}
.tabs span {
  position: relative;
  width: 177px;
  margin-top: -5px;
}
.tabs span:nth-child(2) { width: 189px; }
.tabs span:nth-child(3) { width: 176px; }
.tabs span:nth-child(4) { width: 180px; }
.tabs span:nth-child(5) { width: 167px; }
.tabs span:nth-child(6) { width: 104px; }
.tabs .active { color: #4371b9; }
.tabs .active::after {
  content: "";
  position: absolute;
  left: 4px;
  bottom: -15px;
  width: 65px;
  height: 7px;
  border-radius: 4px;
  background: #4371b9;
}
.gear {
  margin-left: 54px;
  fill: none;
  stroke: #8e8e92;
  stroke-width: 4;
  stroke-linejoin: round;
}

/* ---------- 图表 ---------- */
.ma-bar {
  display: flex;
  align-items: center;
  height: 67px;
  padding-left: 16px;
}
.btn {
  display: flex;
  align-items: center;
  box-sizing: border-box;
  height: 50px;
  padding-bottom: 4px;
  border-radius: 7px;
  background: #333;
  color: #fff;
  font-size: 38px;
}
.drop {
  width: 117px;
  margin-right: 7px;
  padding-left: 11px;
}
.drop svg { margin: 4px 0 0 5px; }
.dk {
  width: 137px;
  margin-left: 84px;
  padding-left: 13px;
}
.dk svg { margin: 27px 0 0 8px; }
.fq {
  width: 143px;
  margin-left: 40px;
  padding-left: 14px;
}
.legend text { fill: currentColor; }
.legend path {
  fill: none;
  stroke: currentColor;
  stroke-width: 3;
}
.frame {
  fill: none;
  stroke: #252525;
  stroke-width: 2;
}
.grid {
  stroke: #303030;
  stroke-dasharray: 2 2;
}
.line {
  fill: none;
  stroke-width: 3.400;
  stroke-linejoin: round;
}
.watermark {
  font-size: 112px;
  font-weight: 900;
  fill: #151515;
}
.axis text,
.over {
  font-size: 44px;
  fill: #8a8a8a;
}
.axis-right text {
  font-size: 44px;
  text-anchor: end;
}
.mark text {
  font-size: 44px;
  fill: #fff;
}
.sell text {
  font-size: 44px;
  fill: #c0352b;
}
.vol-max {
  font-size: 41px;
  fill: #8a8a8a;
}
.kdj-axis text {
  font-size: 34px;
  fill: #363636;
}
.date {
  font-size: 41px;
  fill: #b5b5b5;
}

/* ---------- 推广条 ---------- */
.promo-wrap {
  height: 82px;
  overflow: hidden;
}
.promo {
  display: flex;
  align-items: center;
  width: 1160px;
  height: 96px;
  margin: 18px 0 0 20px;
  border-radius: 60px;
  background: #121a26;
  color: #4371b9;
}
.horn { margin: 0 0 0 33px; }
.promo p {
  width: 722px;
  margin: -5px 0 0 215px;
  font-size: 41.500px;
  letter-spacing: 1px;
}
.next {
  width: 12px;
  margin: -5px 0 0 15px;
  overflow: hidden;
  font-size: 41.500px;
  opacity: .25;
}
.promo-x { margin-left: 12px; }

/* ---------- 底部导航 ---------- */
.bottom {
  display: grid;
  grid-template-columns: 297px 226px 225px 226px 226px;
  box-sizing: border-box;
  height: 147px;
  border-top: 1px solid #333;
  background: #1c1c1c;
}
.index svg { margin: 10px 0 0 138px; }
.point {
  margin: 5px 0 0 72px;
  color: #62d143;
  font-size: 43px;
  line-height: 56px;
}
.sub {
  display: flex;
  align-items: center;
  margin: 0 0 0 45px;
  font-size: 38px;
  line-height: 52px;
}
.sub b {
  margin-left: 46px;
  color: #62d143;
  font-size: 42px;
  font-weight: 400;
  letter-spacing: 1px;
}
.nav {
  display: flex;
  flex-direction: column;
  align-items: center;
  font-size: 38px;
  line-height: 56px;
}
.nav svg {
  margin: 7px 0 8px;
  fill: none;
  stroke: #8e8e92;
  stroke-width: 3.500;
}
.nav .solid {
  fill: #8e8e92;
  stroke: none;
}
.system {
  height: 130px;
  background: #fcfcfc;
}
</style>
